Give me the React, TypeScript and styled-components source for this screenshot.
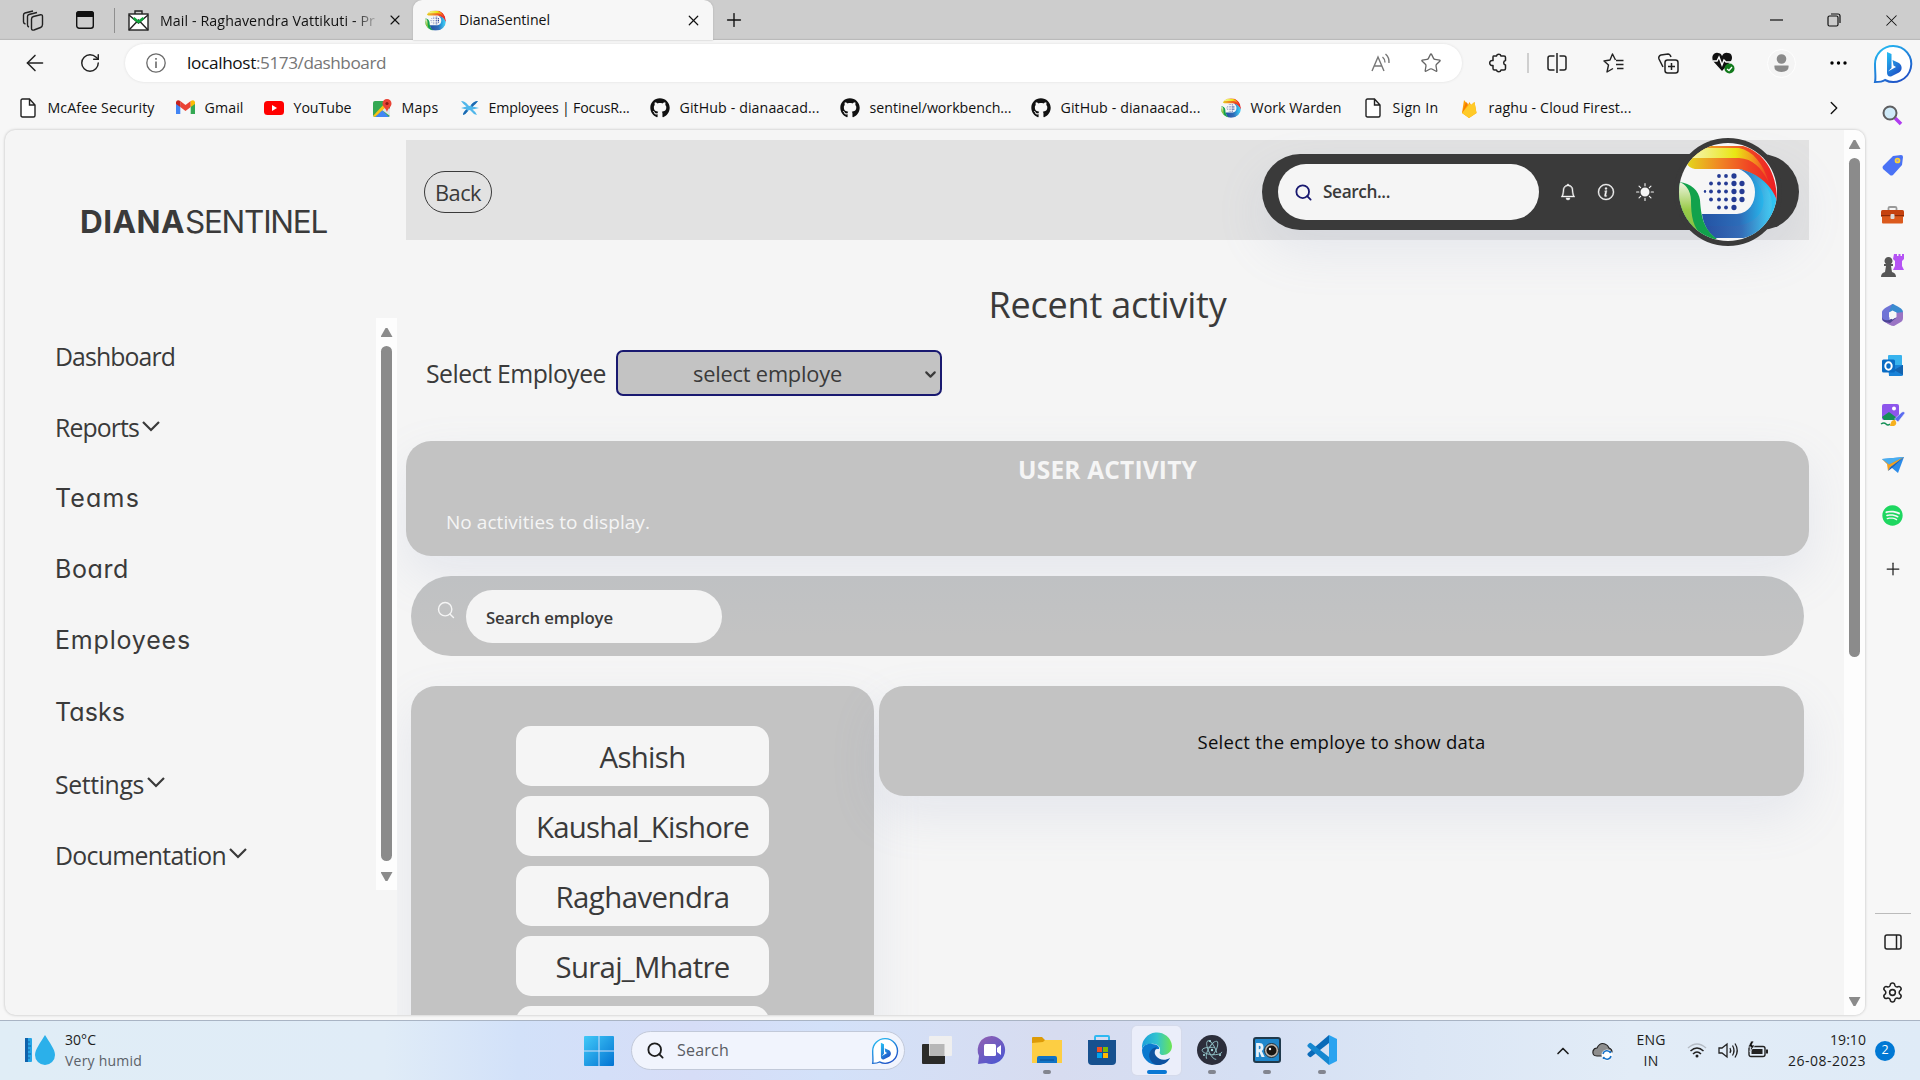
import React, { useLayoutEffect, useRef, useId } from "react";
import styled, { createGlobalStyle, css } from "styled-components";
import { FaGithub, FaSpotify } from "react-icons/fa";
import { BsBell, BsInfoCircle, BsSunFill } from "react-icons/bs";
import { Search, ChevronDown, ChevronUp, ChevronRight, X, Plus, ArrowLeft, RotateCw, Star, Settings } from "lucide-react";

const UI = `"Open Sans", "Noto Sans", sans-serif`;
const GEO = `Inter, "Open Sans", sans-serif`;

const Global = createGlobalStyle`
  * { box-sizing: border-box; }
  html, body { margin: 0; overflow: hidden; background: #f7f7f7; }
  body { font-family: ${UI}; color: #3a3a3a; }
  svg { display: block; flex: none; overflow: visible; }
`;

/* ---------- text ---------- */
const TextSpan = styled.span<{ $size: number; $color?: string; $weight?: number; $geo?: boolean }>`
  display: inline-block;
  white-space: pre;
  flex: none;
  font-size: ${(p) => p.$size}px;
  line-height: 1.3;
  color: ${(p) => p.$color ?? "inherit"};
  font-weight: ${(p) => p.$weight ?? 400};
  ${(p) => p.$geo && css`font-family: ${GEO}; font-feature-settings: "cv11";`}
`;

type TextProps = { w: number; size: number; color?: string; weight?: number; geo?: boolean; children: React.ReactNode };

/* Tracks its letters in or out until the run is exactly w pixels wide. */
function Text({ w, size, color, weight, geo, children }: TextProps) {
  const ref = useRef<HTMLSpanElement>(null);
  useLayoutEffect(() => {
    const el = ref.current;
    if (!el) return;
    el.style.letterSpacing = "0px";
    const n = (el.textContent ?? "").length;
    el.style.letterSpacing = `${((w - el.getBoundingClientRect().width) / n).toFixed(3)}px`;
  }, [w, size]);
  return <TextSpan ref={ref} $size={size} $color={color} $weight={weight} $geo={geo}>{children}</TextSpan>;
}

/* ---------- shell ---------- */
const Screen = styled.div`
  width: 1920px; height: 1080px; display: flex; flex-direction: column; background: #f7f7f7; overflow: hidden;
`;
const Slot = styled.div<{ $w: number }>`
  width: ${(p) => p.$w}px; flex: none; display: flex; align-items: center; justify-content: center;
`;
const Spacer = styled.div`flex: 1;`;

const TitleBar = styled.div`
  height: 40px; flex: none; display: flex; align-items: center; background: #cdcdcd; color: #111;
  box-shadow: inset 0 -2px 1px -1px #b9b9b9;
`;
const TabDivider = styled.div`width: 1px; height: 25px; background: #8f8f8f;`;
const IdleTab = styled.div`
  width: 298px; height: 40px; display: flex; align-items: center; padding-left: 13px; gap: 11px;
`;
const FadeBox = styled.div`
  width: 216px; padding-bottom: 1px; mask-image: linear-gradient(90deg, #000 90%, rgba(0, 0, 0, .15) 100%);
`;
const ActiveTab = styled.div`
  width: 300px; height: 40px; display: flex; align-items: center; background: #f7f7f7;
  border-radius: 9px 9px 0 0; padding: 0 11px 0 12px; gap: 13px; box-shadow: 0 0 2px #aaa;
`;

const Body = styled.div`height: 980px; flex: none; display: flex;`;
const Left = styled.div`width: 1865px; flex: none; display: flex; flex-direction: column;`;
const Toolbar = styled.div`height: 46px; display: flex; align-items: center; color: #222;`;
const Address = styled.div`
  width: 1339px; height: 38px; margin-left: 15px; margin-right: 6px; border-radius: 19px; background: #fff;
  display: flex; align-items: center; padding-right: 6px; box-shadow: 0 0 3px rgba(0,0,0,.1);
`;
const ToolDivider = styled.div`width: 2px; height: 20px; background: #cfcfcf;`;
const Bookmarks = styled.div`height: 44px; display: flex; align-items: center; padding: 0 0 0 18px; color: #111;`;
const Bookmark = styled.div<{ $w: number }>`
  width: ${(p) => p.$w}px; flex: none; display: flex; align-items: center; gap: 9.5px;
`;
const IconBox = styled.div`width: 20px; flex: none; display: flex; align-items: center; justify-content: center;`;

const Rail = styled.div`width: 55px; display: flex; flex-direction: column; align-items: center;`;
const RailItem = styled.div<{ $h?: number }>`
  height: ${(p) => p.$h ?? 50}px; flex: none; display: flex; align-items: center; justify-content: center;
`;
const RailRule = styled.div`width: 36px; height: 1px; background: #bbb;`;

const Frame = styled.div`
  width: 1860px; height: 885px; margin-left: 5px; flex: none; display: flex; overflow: hidden;
  background: #f5f5f5; border-radius: 10px; box-shadow: 0 0 3px rgba(0,0,0,.25);
`;

/* ---------- sidebar ---------- */
const Side = styled.div`width: 392px; flex: none; display: flex; flex-direction: column;`;
const Brand = styled.div`height: 188px; display: flex; align-items: center; padding: 0 0 4px 75px;`;
const NavBox = styled.div`height: 572px; display: flex; justify-content: space-between;`;
const NavList = styled.div`padding: 2px 0 0 50px; display: flex; flex-direction: column;`;
const NavItem = styled.div<{ $geo?: boolean }>`
  height: 71.3px; display: flex; align-items: center; gap: 3px; padding-top: ${(p) => (p.$geo ? 0 : 1)}px;
  & svg { margin-top: -2px; }
`;
const Bar = styled.div`
  width: 21px; flex: none; background: #fdfdfd; display: flex; flex-direction: column; align-items: center;
`;
const Arrow = styled.div<{ $down?: boolean; $top: number }>`
  width: 12px; height: 9px; margin-top: ${(p) => p.$top}px; background: #8b8b8b;
  clip-path: ${(p) => (p.$down ? "polygon(0 0,100% 0,58% 100%,42% 100%)" : "polygon(42% 0,58% 0,100% 100%,0 100%)")};
`;
const Thumb = styled.div<{ $h: number; $top: number }>`
  width: 11px; height: ${(p) => p.$h}px; margin-top: ${(p) => p.$top}px; border-radius: 6px; background: #8b8b8b;
`;

/* ---------- main ---------- */
const Main = styled.div`
  width: 1447px; flex: none; overflow: hidden; padding: 10px 35px 0 9px; display: flex; flex-direction: column;
`;
const shadow = css`box-shadow: 0 20px 50px rgba(132, 148, 190, 0.14);`;
const Header = styled.div`
  height: 100px; flex: none; background: #e2e2e2; display: flex; align-items: center;
  justify-content: space-between; padding: 4px 10px 0 18px;
`;
const Back = styled.div`
  width: 68px; height: 42px; border: 1px solid #3a3a3a; border-radius: 21px; display: flex;
  align-items: center; padding: 2px 0 0 10px;
`;
const Pill = styled.div`
  width: 537px; height: 76px; border-radius: 38px; background: #3a3a3a; display: flex; align-items: center;
  padding-left: 16px; color: #f5f5f5; ${shadow}
`;
const PillInput = styled.div`
  width: 261px; height: 56px; border-radius: 28px; background: #f5f5f5; color: #3a3a3a; display: flex; align-items: center;
  padding-left: 16px; gap: 10px; margin-right: 10px;
`;
const Avatar = styled.div`
  width: 108px; height: 108px; flex: none; border-radius: 50%; background: #3a3a3a; margin-left: 9px; padding: 5px;
`;
const Heading = styled.div`height: 104px; flex: none; padding-top: 26px; display: flex; align-items: center; justify-content: center;`;
const PickRow = styled.div`height: 58px; flex: none; display: flex; align-items: center; padding-left: 20px; gap: 10px;`;
const Select = styled.div`
  width: 326px; height: 46px; border: 2px solid #191970; border-radius: 7px; background: #c3c3c3;
  display: flex; align-items: center; justify-content: space-between; padding: 2px 1px 0 75px;
`;
const Activity = styled.div`
  height: 115px; flex: none; margin-top: 39px; border-radius: 25px; background: #c3c3c3; color: #f5f5f5;
  display: flex; flex-direction: column; ${shadow}
`;
const ActivityTitle = styled.div`height: 57px; display: flex; align-items: center; justify-content: center;`;
const ActivityBody = styled.div`height: 48px; display: flex; align-items: center; padding-left: 40px;`;
const Finder = styled.div`
  height: 80px; flex: none; margin: 20px 5px 0; border-radius: 40px; display: flex; color: #f5f5f5;
  background: linear-gradient(#bfc1c3, #c3c3c3 75%); padding: 14px 0 0 25px; gap: 10px;
  & > svg { margin-top: 10px; }
`;
const FinderInput = styled.div`
  width: 256px; height: 53px; border-radius: 27px; background: #f4f4f4; display: flex; align-items: center; padding: 2px 0 0 20px; color: #3a3a3a;
`;
const Columns = styled.div`display: flex; gap: 5px; margin: 30px 5px 0; align-items: flex-start; flex: none;`;
const People = styled.div`
  width: 463px; height: 420px; border-radius: 25px; background: #c3c3c3; padding-top: 40px;
  display: flex; flex-direction: column; align-items: center; gap: 10px; ${shadow}
`;
const Person = styled.div`
  width: 253px; height: 60px; flex: none; border-radius: 15px; background: #f5f5f5;
  display: flex; align-items: center; justify-content: center; padding-top: 2px;
`;
const Detail = styled.div`
  flex: 1; height: 110px; border-radius: 25px; color: #0c0c0c; background: #c3c3c3; padding-top: 2px;
  display: flex; align-items: center; justify-content: center; ${shadow}
`;

/* ---------- taskbar ---------- */
const Taskbar = styled.div`
  height: 60px; flex: none; display: flex; align-items: center; border-top: 1px solid #a9b4c4; color: #1d1d1d;
  background: linear-gradient(90deg, #e0edf6 0%, #e0ecf7 20%, #d2e1f9 27%, #d6ddf7 36%, #d3e1f9 43%, #d7dcf0 55%, #d5dff3 65%, #dbe6f5 74%, #e2ecf7 85%, #dfebf7 100%);
`;
const Weather = styled.div`width: 571px; padding-left: 24px; display: flex; align-items: center; gap: 9px;`;
const Stack = styled.div<{ $end?: boolean; $center?: boolean }>`
  height: 39px; display: flex; flex-direction: column; line-height: 1; justify-content: space-between;
  align-items: ${(p) => (p.$end ? "flex-end" : p.$center ? "center" : "flex-start")};
`;
const TaskSearch = styled.div`
  width: 274px; height: 39px; border-radius: 20px; background: #f1f4fd; border: 1px solid #c2c9d9; margin: 0 4px;
  display: flex; align-items: center; padding: 0 6px 0 14px; gap: 12px;
`;
const TaskApp = styled.div<{ $active?: boolean }>`
  width: 49px; height: 49px; margin: 0 3px; border-radius: 5px; flex: none; display: flex; flex-direction: column; align-items: center;
  padding-top: 9px; gap: 5px;
  ${(p) => p.$active && css`background: #ebeefa; box-shadow: 0 0 1px 1px #d5daea;`}
`;
const Mark = styled.div<{ $active?: boolean }>`
  width: ${(p) => (p.$active ? 20 : 8)}px; height: 4px; border-radius: 2px; background: ${(p) => (p.$active ? "#0a78d4" : "#82858f")};
`;
const Badge = styled.div`
  width: 20px; height: 20px; border-radius: 50%; background: #0078d4; color: #fff; display: flex;
  align-items: center; justify-content: center; margin-left: 9px; margin-right: 25px;
`;

/* ---------- drawings ---------- */
function DianaLogo({ size }: { size: number }) {
  const id = useId().replace(/[^a-z0-9]/gi, "");
  const dots: [number, number[]][] = [
    [33, [40, 47, 55]], [40.5, [32, 40, 47, 55, 63]], [48.5, [26, 32, 40, 47, 55, 63]],
    [56.5, [32, 40, 47, 55, 63]], [64.5, [40, 47, 55]],
  ];
  return (
    <svg width={size} height={size} viewBox="0 0 98 98">
      <defs>
        <clipPath id={`c${id}`}><circle cx="49" cy="49" r="49" /></clipPath>
        <linearGradient id={`y${id}`}><stop offset=".1" stopColor="#f5f3a8" /><stop offset=".6" stopColor="#e9e613" /><stop offset=".8" stopColor="#f39a1d" /><stop offset="1" stopColor="#ee3a24" /></linearGradient>
        <linearGradient id={`o${id}`}><stop stopColor="#e3d91c" /><stop offset=".35" stopColor="#f08a24" /><stop offset=".7" stopColor="#f04424" /><stop offset="1" stopColor="#ec1c24" /></linearGradient>
        <linearGradient id={`b${id}`}><stop stopColor="#2453a4" /><stop offset=".5" stopColor="#2d6cb8" /><stop offset=".85" stopColor="#27bdf0" /><stop offset="1" stopColor="#35c8f4" /></linearGradient>
        <linearGradient id={`l${id}`}><stop stopColor="#2a4fa0" /><stop offset=".55" stopColor="#3a6cb6" /><stop offset="1" stopColor="#55cbee" /></linearGradient>
        <linearGradient id={`g${id}`} x2="0" y2="1"><stop stopColor="#f0f5e3" /><stop offset=".5" stopColor="#9acb4a" /><stop offset="1" stopColor="#7cbf3f" /></linearGradient>
      </defs>
      <g clipPath={`url(#c${id})`}>
        <rect width="98" height="98" fill="#f6f6f6" />
        <path d="M10 3H64C84 9 98 28 98 58C92 44 78 30 60 26H16Q10 25 7 20Z" fill={`url(#o${id})`} />
        <path d="M16 5H60C74 8 84 20 90 40C82 24 74 16 60 15H6Z" fill={`url(#y${id})`} />
        <path d="M60 26C80 30 94 44 98 58C98 78 84 91 64 95H36C28 88 24 80 23 71H58C70 70 76 60 76 49C76 39 70 30 60 26Z" fill={`url(#b${id})`} />
        <path d="M66 29C90 42 94 78 58 83H27C29 89 32 92 38 95H64C100 86 104 40 66 29Z" fill={`url(#l${id})`} opacity=".6" />
        <path d="M0 39C12 40 20 48 21 57C22 72 24 86 38 96H20L0 76Z" fill="#12a24c" />
        <path d="M0 39C6 40 12 48 12 57C12 74 14 84 24 94L0 80Z" fill={`url(#g${id})`} />
        {dots.map(([y, xs]) => xs.map((x) => <ellipse key={`${x}-${y}`} cx={x} cy={y} rx={x > 50 ? 2.6 : x > 30 ? 1.9 : 1.2} ry={x > 50 ? 2.8 : x > 30 ? 1.9 : 1.4} fill="#253b94" />))}
      </g>
    </svg>
  );
}
function Bing({ size }: { size: number }) {
  const id = useId().replace(/[^a-z0-9]/gi, "");
  return (
    <svg width={size} height={size} viewBox="0 0 38 38">
      <defs><linearGradient id={`r${id}`} x1="0" y1="0" x2=".6" y2="1"><stop stopColor="#25c2f5" /><stop offset="1" stopColor="#1f55c8" /></linearGradient></defs>
      <path d="M19 1A18 18 0 1 1 11 35C8 37 4 37 1 37C2 33 1 28 1 19A18 18 0 0 1 19 1Z" fill="#fff" stroke={`url(#r${id})`} strokeWidth="2" />
      <path d="M13 7L17.500 9V23L14 26.500 22 22 19.500 20.500 18.500 15 25 18C29 21 28 26 25 27.500L17 31.500C14 32 13 29.500 13 27.500Z" fill={`url(#r${id})`} />
    </svg>
  );
}
const PageIcon = () => <svg width="16" height="20" viewBox="0 0 16 20"><path d="M2.5 1H9.5L15 7V17.5Q15 19 13.5 19H2.5Q1 19 1 17.5V2.5Q1 1 2.5 1ZM9.5 1V7H15" fill="#fff" stroke="#222" strokeWidth="1.4" /></svg>;
const Gmail = () => <svg width="19" height="15" viewBox="0 0 19 15"><path d="M0 2V14H4.3V5Z" fill="#4285f4" /><path d="M19 2V14H14.7V5Z" fill="#34a853" /><path d="M4.3 1L9.5 5 14.7 1V7L9.5 11 4.3 7Z" fill="#ea4335" /><path d="M0 2Q1 -1 4.3 1V7L0 4Z" fill="#c5221f" /><path d="M19 2Q18-1 14.7 1V7L19 4Z" fill="#fbbc04" /></svg>;
const YouTube = () => <svg width="20" height="14" viewBox="0 0 20 14"><rect width="20" height="14" rx="3.5" fill="#f00" /><path d="M8 4V10L13 7Z" fill="#fff" /></svg>;
const Maps = () => <svg width="19" height="19" viewBox="0 0 19 19"><rect y="2" width="17" height="16" rx="2" fill="#34a853" /><path d="M2 18L9 11 16 18Z" fill="#4285f4" /><path d="M9 11L14 7 17 10V17Z" fill="#dfe3e8" /><path d="M0 17L13 3 15 6 2 18Z" fill="#fbc116" /><path d="M14 0A4.5 4.5 0 0 1 18.5 4.5C18.5 8 15 9 14 13C13 9 9.500 8 9.500 4.500A4.500 4.500 0 0 1 14 0Z" fill="#e94335" /><circle cx="14" cy="4.500" r="1.600" fill="#8c1a13" /></svg>;
const Focus = () => <svg width="19" height="16" viewBox="0 0 19 16"><path d="M1 1Q5 1 8 5 9.500 7 11 5 14 1 18 1 16 4 12.500 6.500L19 8 12.500 9.500Q16 12 17 15 13 14 11 11 9.500 9 8 11 6 14 3 15 3 12 6.500 9.500L1 8 6.500 6.500Q3 4 1 1Z" fill="#4fb6ea" /><path d="M11 5Q14 1 18 1 16 4 12 7ZM8 11Q6 14 3 15 3 12 6.500 9.500Z" fill="#1d68b0" /></svg>;
const Fire = () => <svg width="16" height="20" viewBox="0 0 16 20"><path d="M1 15L3 2 7 7 8.500 4 10 7 13.500 4 15.500 15 8 20Z" fill="#ffa000" /><path d="M1 15L8.500 6 10 7 13.500 4 15.500 15 8 20Z" fill="#ffca28" /><path d="M1 15L7 6 5 4Z" fill="#f57c00" /></svg>;
const Mail = () => <svg width="21" height="21" viewBox="0 0 21 21" fill="none" stroke="#222" strokeWidth="1.400"><path d="M7 4V1H14V4" /><rect x="1" y="4" width="19" height="16" fill="#fff" /><path d="M1 20L10.500 10 20 20" /><path d="M1 5L10.500 13 20 5" /><path d="M5.500 8L10.500 12 15.500 8" stroke="#10a53c" strokeWidth="2.500" /></svg>;
const Workspaces = () => <svg width="22" height="21" viewBox="0 0 22 21" fill="none" stroke="#222" strokeWidth="1.400"><path d="M11.500 6.500L18.500 4.800Q20.500 4.500 20.500 6.500V14.500Q20.500 16.500 18.500 17.500L12 20Q9.500 20.500 9.500 18.500V9Q9.500 7 11.500 6.500Z" /><path d="M7 17Q5.500 16.500 5.500 15V6.500Q5.500 5 7 4.500L15 2.500M3.500 14Q1.500 13.500 1.500 12V5Q1.500 3.500 3 3L11 1" /></svg>;
const TabsIcon = () => <svg width="18" height="18" viewBox="0 0 18 18"><rect x=".7" y=".7" width="16.600" height="16.600" rx="2.500" fill="none" stroke="#111" strokeWidth="1.400" /><path d="M0 6V3Q0 0 3 0H15Q18 0 18 3V6Z" fill="#111" /></svg>;
const Puzzle = () => <svg width="20" height="20" viewBox="0 0 20 20" fill="none" stroke="#222" strokeWidth="1.500" strokeLinejoin="round"><path d="M5.500 3H8.500A2.300 2.300 0 0 1 13 3H16Q17.500 3 17.500 4.500V7.500A2.300 2.300 0 0 0 17.500 12V15.500Q17.500 17 16 17H13A2.300 2.300 0 0 1 8.500 17H6.500Q5 17 5 15.500V12.500A2.600 2.600 0 1 1 5 7.500V4Q5 3 5.500 3Z" /></svg>;
const Split = () => <svg width="20" height="20" viewBox="0 0 20 20" fill="none" stroke="#222" strokeWidth="1.500"><path d="M7.500 3H3Q1 3 1 5V15Q1 17 3 17H7.500M12.500 3H17Q19 3 19 5V15Q19 17 17 17H12.500M10 0V20" /></svg>;
const FavList = () => <svg width="21" height="20" viewBox="0 0 21 20" fill="none" stroke="#222" strokeWidth="1.400" strokeLinejoin="round"><path d="M13 7.500H20.500M13 11.500H20.500M14 15.500H20.500" /><path d="M12.500 7L9.500 1 7 7 1 8 5.500 12 4 19 10 15.500" /></svg>;
const Collections = () => <svg width="21" height="21" viewBox="0 0 21 21" fill="none" stroke="#222" strokeWidth="1.500"><rect x="7" y="7" width="13" height="13" rx="2.500" /><path d="M13.500 10V17M10 13.500H17M5 14L1 6Q0 3 3 2L10 1Q12 1 13 4" /></svg>;
const Heart = () => <svg width="23" height="22" viewBox="0 0 23 22"><path d="M10 19L1 9C-1 4 2 0 6 1Q9 1 10 4 12 0 16 1C20 1 21 6 19 9Z" fill="#111" /><path d="M1 9H5L7 5 10 13 12 8 14 10H19" fill="none" stroke="#fff" strokeWidth="1.400" /><circle cx="17.500" cy="16.500" r="5" fill="#127a1c" /><path d="M15 17L17 18.500 20 15" fill="none" stroke="#fff" strokeWidth="1.300" /></svg>;
const User = () => <svg width="29" height="29" viewBox="0 0 29 29"><circle cx="14.500" cy="14.500" r="14" fill="#f4f4f4" stroke="#fff" /><circle cx="14.500" cy="10" r="4.800" fill="#8a8a8a" /><path d="M7.500 16.500H21.500Q22.500 23 14.500 23 6.500 23 7.500 16.500Z" fill="#8a8a8a" /></svg>;
const Dots = () => <svg width="17" height="4" viewBox="0 0 17 4"><circle cx="2" cy="2" r="1.700" /><circle cx="8.500" cy="2" r="1.700" /><circle cx="15" cy="2" r="1.700" /></svg>;
const ReadAloud = () => <svg width="20" height="18" viewBox="0 0 20 18" fill="none" stroke="#777" strokeWidth="1.400"><path d="M1 17L7 3 13 17M3 12H11M11.500 3Q14 5 14 8.500M14.500 0Q18.500 3.500 18 9" /></svg>;
const Info = () => <svg width="20" height="20" viewBox="0 0 20 20" fill="none" stroke="#6a6a6a" strokeWidth="1.300"><circle cx="10" cy="10" r="9.200" /><path d="M10 8.500V15M10 5V6.700" strokeWidth="1.600" /></svg>;

const Magnifier = () => <svg width="21" height="21" viewBox="0 0 21 21"><path d="M13 13L19 19" stroke="#b03cf0" strokeWidth="3.500" /><circle cx="8" cy="8" r="6.500" fill="#cfeaf8" stroke="#5e5e60" strokeWidth="2" /></svg>;
const Tag = () => <svg width="21" height="21" viewBox="0 0 21 21"><path d="M11 1L19 0Q21 0 21 2L20 10 11 20Q9 21 8 20L1 14Q0 12 1 11Z" fill="#4a72f5" /><circle cx="15.500" cy="5.500" r="2" fill="#9a9ae0" stroke="#fdd32f" strokeWidth="1.700" /></svg>;
const Toolbox = () => <svg width="23" height="18" viewBox="0 0 23 18"><path d="M7.500 5V2Q7.500 1 9 1H14Q15.500 1 15.500 2V5" fill="none" stroke="#999" strokeWidth="1.800" /><rect y="4" width="23" height="7" rx="1.500" fill="#c5420f" /><rect x="1" y="9.500" width="21" height="8" rx="1" fill="#db5a1d" /><rect y="9" width="23" height="1.200" fill="#8d2b08" /><rect x="9.500" y="8" width="4" height="5" rx="1" fill="#dcdcdc" /></svg>;
const Chess = () => <svg width="23" height="23" viewBox="0 0 23 23"><path d="M13 0H16V2H17.500V0H19.500V2H21V0H23V5L21 7V12L23 16H12L14 12V7L12 5Z" fill="#b553f4" /><path d="M0 23Q0 19 4 18L5 12H3V10H5A4 4 0 1 1 10 10H12V12H10L11 18Q15 19 15 23Z" fill="#565656" /></svg>;
const M365 = () => <svg width="21" height="22" viewBox="0 0 21 22"><path d="M10.500 0L4 3.500Q0 6 0 8V15Q0 17 3 18L7.500 20.500V8L14 5 12 1Z" fill="#6f74d6" /><path d="M10.500 0Q12 0 19 4.500 21 6 21 8V14L14 10V8L7.500 8.500V7L9 2Z" fill="#3a8bd0" /><path d="M21 8V14Q21 17 18 18.500L12 22Q10 22 7 20.500L3 18 10 15 14 13V9Z" fill="#9a74c4" /><path d="M0 13Q1 17 7 16L11 14 14 14 8 19 3 18Q0 17 0 13Z" fill="#4d4494" /><path d="M10.500 6.500L14.500 8.500V13L10.500 15.500 7 13V8.500Z" fill="#f7f7f7" /></svg>;
const Outlook = () => <svg width="21" height="21" viewBox="0 0 21 21"><rect x="6" width="14" height="17" rx="1" fill="#38b3ee" /><path d="M6 10L21 10V20Q21 21 19 21H7Z" fill="#1a83d8" /><path d="M21 10L12 15 21 20Z" fill="#1464b0" /><rect y="4.500" width="13" height="13" rx="1.500" fill="#0a6cc4" /><ellipse cx="6.500" cy="11" rx="3.200" ry="3.700" fill="none" stroke="#fff" strokeWidth="2" /></svg>;
const Picture = () => <svg width="24" height="23" viewBox="0 0 24 23"><rect x="1" width="17" height="16" rx="2" fill="#8d55ec" /><circle cx="13" cy="4.500" r="2" fill="#fff" /><path d="M1 13L8 8 16 14V16H3Z" fill="#159056" /><path d="M0 20Q3 18 5 20T9 20" fill="none" stroke="#159056" strokeWidth="1.500" /><path d="M13.500 15L21 8Q23 7 24 9L17 18Z" fill="#5b6cf0" stroke="#f7f7f7" strokeWidth=".5" /><path d="M9 22Q10 15 14 16 17 20 13 22Z" fill="#f6b01e" /></svg>;
const Plane = () => <svg width="22" height="16" viewBox="0 0 22 16"><path d="M0 2L22 0 16 16 10 11Z" fill="#2c8be8" /><path d="M0 2L22 0 7 7.500Z" fill="#49aef0" /><path d="M0 2L7 7.500 22 0 8 10.500 6 14 5 7Z" fill="#f2a01f" /><path d="M22 0L8 10.500 6 14 10 11Z" fill="#1b5fb5" /></svg>;
const Panel = () => <svg width="18" height="16" viewBox="0 0 18 16" fill="none" stroke="#222" strokeWidth="1.500"><rect x="1" y="1" width="16" height="14" rx="2" /><path d="M12.500 1V15" /></svg>;

const Humid = () => <svg width="32" height="31" viewBox="0 0 32 31"><rect x="1" y="3" width="7" height="24" rx="1" fill="#27a6e6" /><path d="M1 3H4V27H1Z" fill="#0f62ab" /><path d="M4 7H6M4 11H7M4 15H6M4 19H7M4 23H6" stroke="#0f62ab" /><path d="M21 0C25 7 31 14 31 20A10 10 0 0 1 11 20C11 14 17 7 21 0Z" fill="#2bb0ea" /></svg>;
const Windows = () => <svg width="30" height="30" viewBox="0 0 30 30"><defs><linearGradient id="win" x2="1" y2="1"><stop stopColor="#41c9f8" /><stop offset="1" stopColor="#0373d2" /></linearGradient></defs><path d="M1 0H14.500V14.500H0V1Q0 0 1 0ZM15.500 0H29Q30 0 30 1V14.500H15.500ZM0 15.500H14.500V30H1Q0 30 0 29ZM15.500 15.500H30V29Q30 30 29 30H15.500Z" fill="url(#win)" /></svg>;
const TaskView = () => <svg width="30" height="30" viewBox="0 0 30 30"><rect y="9" width="23" height="20" rx="1" fill="#2b2b29" /><rect x="7" y="1" width="23" height="20" rx="1" fill="#efefef" /><rect x="7.500" y="9" width="15" height="12" fill="#b7b7b7" /></svg>;
const Chat = () => <svg width="30" height="30" viewBox="0 0 30 30"><defs><linearGradient id="cht" x2=".7" y2="1"><stop stopColor="#9460b0" /><stop offset="1" stopColor="#4f57d0" /></linearGradient></defs><path d="M15 1A14 14 0 1 1 9 28L1 29 2 21A14 14 0 0 1 15 1Z" fill="url(#cht)" /><rect x="7" y="9" width="12" height="12" rx="1.500" fill="#fff" /><path d="M20 13L24 10V20L20 17Z" fill="#fff" /></svg>;
const Folder = () => <svg width="30" height="30" viewBox="0 0 30 30"><path d="M0 3Q0 2 1 2H10L13 5H29V14H0Z" fill="#dd9b07" /><path d="M0 8L11 7 13 5H30V28H0Z" fill="#fdce43" /><path d="M5 28V23Q5 21 7 21H23Q25 21 25 23V28Z" fill="#1173c5" /><path d="M8 25H22" stroke="#0a4d8f" /></svg>;
const Store = () => <svg width="30" height="30" viewBox="0 0 30 30"><path d="M8 5V2Q8 1 9 1H21Q22 1 22 2V5" fill="none" stroke="#2fb9f2" strokeWidth="2" /><path d="M1 5H29V26Q29 30 25 30H5Q1 30 1 26Z" fill="#17518f" /><path d="M10 12h5v5h-5z" fill="#f25022" /><path d="M16 12h5v5h-5z" fill="#7fba00" /><path d="M10 18h5v5h-5z" fill="#00a4ef" /><path d="M16 18h5v5h-5z" fill="#ffb900" /></svg>;
const Edge = () => <svg width="30" height="30" viewBox="0 0 30 30"><defs><linearGradient id="edg"><stop stopColor="#1b9fdc" /><stop offset=".5" stopColor="#32c4cf" /><stop offset="1" stopColor="#6de552" /></linearGradient></defs><path d="M0 14A15 15 0 0 1 30 11C30 17 25 20 21 20 18 20 17 18 18 16 19 11 14 8 9 9 4 9 1 11 0 14Z" fill="url(#edg)" /><path d="M0 15C1 10 6 8 10 9 15 9 18 12 17 14 10 13 9 19 12 23 15 28 23 28 28 23 24 29 19 30 15 30A15 15 0 0 1 0 15Z" fill="#0b79cf" /><path d="M15 12C8 13 5 20 9 26 11 29 14 30 16 30 21 30 25 28 28 23 23 26 17 25 14 21 11 17 14 14 15 12Z" fill="#0d52a0" /></svg>;
const Electron = () => (
  <svg width="30" height="30" viewBox="0 0 30 30" fill="none" stroke="#8fbfc4" strokeWidth=".9">
    <circle cx="15" cy="15" r="15" fill="#2c2e3b" stroke="none" />
    <ellipse cx="15" cy="16" rx="10" ry="3.600" transform="rotate(5 15 16)" strokeDasharray="36 9" />
    <ellipse cx="15" cy="15" rx="10" ry="3.600" transform="rotate(65 15 15)" strokeDasharray="38 7" />
    <ellipse cx="15" cy="15" rx="10" ry="3.600" transform="rotate(120 15 15)" strokeDasharray="38 7" />
    <circle cx="15" cy="15" r="1.200" fill="#a6dfe0" stroke="none" />
    <circle cx="7" cy="20" r="1" fill="#a6dfe0" stroke="none" /><circle cx="23" cy="20" r="1" fill="#a6dfe0" stroke="none" /><circle cx="13" cy="6" r="1" fill="#a6dfe0" stroke="none" />
  </svg>
);
const RTile = styled.span`
  width: 28px; height: 26px; margin: 2px 0; border: 2px solid #203a4c; border-radius: 3px; background: #1f87cc; color: #e6f2fa;
  display: flex; align-items: center; justify-content: space-between; font: 700 20px/1 "Open Sans", sans-serif; flex: none;
  & > b { width: 9px; transform: scaleX(.7); transform-origin: left; }
`;
const Eye = () => <svg width="15" height="15" viewBox="0 0 15 15"><circle cx="7.500" cy="7.500" r="7" fill="#bfb6ab" stroke="#20303c" /><circle cx="7.500" cy="7.500" r="5" fill="#191512" /><circle cx="6" cy="6" r="1.200" fill="#fff" /></svg>;
const Code = () => <svg width="30" height="30" viewBox="0 0 30 30"><path d="M22 0L30 4V26L22 30Z" fill="#2aa3f0" /><path d="M22 0V8L4 22Q3 22.500 2 21.500L.5 20Q0 19 1 18Z" fill="#0a6ab8" /><path d="M22 30V22L4 8Q3 7.500 2 8.500L.5 10Q0 11 1 12Z" fill="#1587d0" /></svg>;
const Cloud = () => <svg width="22" height="18" viewBox="0 0 22 18"><path d="M5 14Q0 14 1 9 2 6 5 6 8 0 13 2 16 3 17 6 20 7 20 10L14 14Z" fill="#8e8e8e" stroke="#222" strokeWidth="1.200" /><circle cx="15" cy="13" r="5.500" fill="#fff" /><path d="M11 12A4 4 0 0 1 18.500 11V9M19 14A4 4 0 0 1 11.500 15V17" fill="none" stroke="#1a73c8" strokeWidth="1.500" /></svg>;
const Wifi = () => <svg width="20" height="15" viewBox="0 0 20 15" fill="none" stroke="#222" strokeWidth="1.500"><path d="M1 5Q10-3 19 5" stroke="#b5bcc5" /><path d="M3.500 8Q10 2 16.500 8M6 11Q10 7 14 11" /><circle cx="10" cy="13" r="1.500" fill="#222" stroke="none" /></svg>;
const Volume = () => <svg width="20" height="17" viewBox="0 0 20 17" fill="none" stroke="#222" strokeWidth="1.300"><path d="M1 6H4L9 2V15L4 11H1ZM12 6Q13.500 8.500 12 11M14.500 3.500Q17.500 8.500 14.500 13.500M17 1.500Q21.500 8.500 17 15.500" /></svg>;
const Battery = () => <svg width="20" height="17" viewBox="0 0 20 17"><rect x="1" y="4.500" width="16" height="10" rx="2" fill="none" stroke="#222" strokeWidth="1.400" /><rect x="3.500" y="7" width="11" height="5" fill="#222" /><rect x="18" y="7.500" width="2" height="4" fill="#222" /><path d="M3-1L0 5H3L2 10 7 3H4L6-1Z" fill="#111" stroke="#e2ecf7" strokeWidth=".8" /></svg>;

/* ---------- data ---------- */
const bookmarks: [React.ReactNode, string, number, number][] = [
  [<PageIcon />, "McAfee Security", 107, 157],
  [<Gmail />, "Gmail", 39, 89],
  [<YouTube />, "YouTube", 58, 108],
  [<Maps />, "Maps", 37, 87],
  [<Focus />, "Employees | FocusR...", 141, 191],
  [<FaGithub size={20} />, "GitHub - dianaacad...", 140, 190],
  [<FaGithub size={20} />, "sentinel/workbench...", 142, 191],
  [<FaGithub size={20} />, "GitHub - dianaacad...", 140, 190],
  [<DianaLogo size={20} />, "Work Warden", 91, 142],
  [<PageIcon />, "Sign In", 46, 96],
  [<Fire />, "raghu - Cloud Firest...", 143, 190],
];
const nav: { label: string; w: number; geo?: boolean; more?: boolean }[] = [
  { label: "Dashboard", w: 120 },
  { label: "Reports", w: 84, more: true },
  { label: "Teams", w: 85, geo: true },
  { label: "Board", w: 74, geo: true },
  { label: "Employees", w: 136, geo: true },
  { label: "Tasks", w: 70, geo: true },
  { label: "Settings", w: 89, more: true },
  { label: "Documentation", w: 171, more: true },
];
const people: [string, number][] = [["Ashish", 86], ["Kaushal_Kishore", 213], ["Raghavendra", 174], ["Suraj_Mhatre", 174]];
const rail = [<Magnifier />, <Tag />, <Toolbox />, <Chess />, <M365 />, <Outlook />, <Picture />, <Plane />, <FaSpotify size={21} color="#1ed760" />];

export default function App() {
  return (
    <Screen>
      <Global />
      <TitleBar>
        <Slot $w={65}><Workspaces /></Slot>
        <Slot $w={39}><TabsIcon /></Slot>
        <Slot $w={10} />
        <TabDivider />
        <IdleTab>
          <Mail />
          <FadeBox><Text w={215} size={14.2}>Mail - Raghavendra Vattikuti - Pr</Text></FadeBox>
          <X size={16} strokeWidth={1.7} />
        </IdleTab>
        <ActiveTab>
          <DianaLogo size={21} />
          <Text w={91} size={14.2}>DianaSentinel</Text>
          <Spacer />
          <X size={17} strokeWidth={1.7} />
        </ActiveTab>
        <Slot $w={42}><Plus size={22} strokeWidth={1.5} /></Slot>
        <Spacer />
        <Slot $w={57}><svg width="13" height="2"><path d="M0 1H13" stroke="#111" strokeWidth="1.200" /></svg></Slot>
        <Slot $w={57}><svg width="14" height="14" viewBox="0 0 14 14" fill="none" stroke="#111" strokeWidth="1.200"><rect x="1" y="3" width="10" height="10" rx="1.500" /><path d="M4 1H11Q13 1 13 3V10" /></svg></Slot>
        <Slot $w={58}><X size={19} strokeWidth={1.300} /></Slot>
      </TitleBar>

      <Body>
        <Left>
          <Toolbar>
            <Slot $w={70}><ArrowLeft size={26} strokeWidth={1.400} /></Slot>
            <Slot $w={40}><RotateCw size={22} strokeWidth={1.600} /></Slot>
            <Address>
              <Slot $w={62}><Info /></Slot>
              <Text w={69} size={17.2} color="#111">localhost</Text>
              <Text w={130} size={17.2} color="#767676">:5173/dashboard</Text>
              <Spacer />
              <Slot $w={50}><ReadAloud /></Slot>
              <Slot $w={50}><Star size={22} strokeWidth={1.400} color="#666" /></Slot>
            </Address>
            <Slot $w={59}><Puzzle /></Slot>
            <ToolDivider />
            <Slot $w={56}><Split /></Slot>
            <Slot $w={57}><FavList /></Slot>
            <Slot $w={53}><Collections /></Slot>
            <Slot $w={57}><Heart /></Slot>
            <Slot $w={59}><User /></Slot>
            <Slot $w={54}><Dots /></Slot>
          </Toolbar>
          <Bookmarks>
            {bookmarks.map(([icon, label, w, slot], i) => (
              <Bookmark key={i} $w={slot}><IconBox>{icon}</IconBox><Text w={w} size={14.2}>{label}</Text></Bookmark>
            ))}
            <Spacer />
            <Slot $w={63}><ChevronRight size={22} strokeWidth={1.500} /></Slot>
          </Bookmarks>

          <Frame>
            <Side>
              <Brand>
                <Text w={105} size={31.500} weight={700} geo>DIANA</Text>
                <Text w={142} size={31.500} geo>SENTINEL</Text>
              </Brand>
              <NavBox>
                <NavList>
                  {nav.map((n) => (
                    <NavItem key={n.label} $geo={n.geo}>
                      <Text w={n.w} size={n.geo ? 25 : 24.8} geo={n.geo}>{n.label}</Text>
                      {n.more && <svg width="18" height="11" viewBox="0 0 18 11" fill="none" stroke="#3a3a3a" strokeWidth="2.200"><path d="M1 1L9 9 17 1" /></svg>}
                    </NavItem>
                  ))}
                </NavList>
                <Bar><Arrow $top={10} /><Thumb $top={9} $h={515} /><Arrow $down $top={11} /></Bar>
              </NavBox>
            </Side>

            <Main>
              <Header>
                <Back><Text w={46} size={21.8}>Back</Text></Back>
                <Pill>
                  <PillInput>
                    <Search size={19} strokeWidth={2.300} color="#191970" />
                    <Text w={67} size={17.3} weight={600}>Search...</Text>
                  </PillInput>
                  <Slot $w={38}><BsBell size={16} strokeWidth={.4} /></Slot>
                  <Slot $w={38}><BsInfoCircle size={16} strokeWidth={.4} /></Slot>
                  <Slot $w={40}><BsSunFill size={18} /></Slot>
                  <Avatar><DianaLogo size={98} /></Avatar>
                </Pill>
              </Header>
              <Heading><Text w={238} size={36}>Recent activity</Text></Heading>
              <PickRow>
                <Text w={180} size={24.800}>Select Employee</Text>
                <Select>
                  <Text w={149} size={21.800}>select employe</Text>
                  <ChevronDown size={17} strokeWidth={3} />
                </Select>
              </PickRow>
              <Activity>
                <ActivityTitle><Text w={179} size={24.500} weight={700}>USER ACTIVITY</Text></ActivityTitle>
                <ActivityBody><Text w={204} size={19}>No activities to display.</Text></ActivityBody>
              </Activity>
              <Finder>
                <Search size={20} strokeWidth={1.700} />
                <FinderInput><Text w={127} size={16.800} weight={600}>Search employe</Text></FinderInput>
              </Finder>
              <Columns>
                <People>
                  {people.map(([name, w]) => <Person key={name}><Text w={w} size={29.400}>{name}</Text></Person>)}
                  <Person />
                </People>
                <Detail><Text w={288} size={18.500}>Select the employe to show data</Text></Detail>
              </Columns>
            </Main>
            <Bar><Arrow $top={10} /><Thumb $top={9} $h={499} /><Arrow $down $top={340} /></Bar>
          </Frame>
        </Left>

        <Rail>
          <RailItem $h={48}><Bing size={38} /></RailItem>
          <RailItem $h={2} />
          {rail.map((icon, i) => <RailItem key={i}>{icon}</RailItem>)}
          <RailItem $h={58}><Plus size={20} strokeWidth={1.500} color="#222" /></RailItem>
          <Spacer />
          <RailRule />
          <RailItem $h={56}><Panel /></RailItem>
          <RailItem $h={45}><Settings size={23} strokeWidth={1.600} color="#222" /></RailItem>
          <RailItem $h={5} />
        </Rail>
      </Body>

      <Taskbar>
        <Weather>
          <Humid />
          <Stack><Text w={31} size={14}>30°C</Text><Text w={77} size={14} color="#5b6168">Very humid</Text></Stack>
        </Weather>
        <Slot $w={56}><Windows /></Slot>
        <TaskSearch>
          <Search size={19} strokeWidth={2.300} />
          <Text w={52} size={16} color="#5a5c63">Search</Text>
          <Spacer />
          <Bing size={26} />
        </TaskSearch>
        <TaskApp><TaskView /></TaskApp>
        <TaskApp><Chat /></TaskApp>
        <TaskApp><Folder /><Mark /></TaskApp>
        <TaskApp><Store /></TaskApp>
        <TaskApp $active><Edge /><Mark $active /></TaskApp>
        <TaskApp><Electron /><Mark /></TaskApp>
        <TaskApp><RTile><b>R</b><Eye /></RTile><Mark /></TaskApp>
        <TaskApp><Code /><Mark /></TaskApp>
        <Spacer />
        <Slot $w={40}><ChevronUp size={20} strokeWidth={2} /></Slot>
        <Slot $w={40}><Cloud /></Slot>
        <Slot $w={56}><Stack $center><Text w={29} size={14}>ENG</Text><Text w={15} size={14}>IN</Text></Stack></Slot>
        <Slot $w={36}><Wifi /></Slot>
        <Slot $w={26}><Volume /></Slot>
        <Slot $w={34}><Battery /></Slot>
        <Slot $w={13} />
        <Stack $end><Text w={36} size={14}>19:10</Text><Text w={78} size={14}>26-08-2023</Text></Stack>
        <Badge><Text w={7} size={12.500}>2</Text></Badge>
      </Taskbar>
    </Screen>
  );
}
